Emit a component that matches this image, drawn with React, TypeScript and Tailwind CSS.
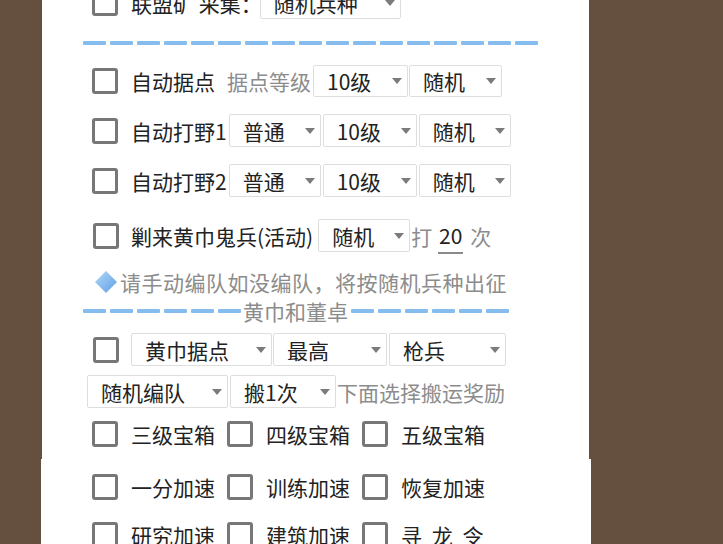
import React from 'react';

// 复选框（未选中）
const Check = () => (
  <span className="block w-[26px] h-[26px] shrink-0 border-[3px] border-[#777777] rounded-[3px] bg-white" />
);

// 下拉框
const Sel = ({ label, className = '' }: { label: string; className?: string }) => (
  <div
    className={`h-full shrink-0 flex items-center justify-between pl-[13px] pr-[5px] border border-[#dedede] rounded-[2px] bg-white text-[#222222] ${className}`}
  >
    <span>{label}</span>
    <svg width="10" height="6" viewBox="0 0 10 6">
      <path d="M0 0h10L5 6z" fill="#7b7b7b" />
    </svg>
  </div>
);

const Dashes = ({ count }: { count: number }) => (
  <div className="flex gap-[4px] shrink-0">
    {Array.from({ length: count }).map((_, i) => (
      <span key={i} className="block w-[23px] h-[4px] rounded-[1px] bg-[#86bdee]" />
    ))}
  </div>
);

const CheckItem = ({ label, last }: { label: string; last?: boolean }) => (
  <div className={`flex items-center ${last ? '' : 'w-[135px]'}`}>
    <Check />
    <span className="ml-[13px] text-[#222222] [word-spacing:5px]">{label}</span>
  </div>
);

const Diamond = () => (
  <svg width="24" height="24" viewBox="0 0 24 24" className="shrink-0">
    <defs>
      <linearGradient id="dg" x1="0" y1="0" x2="1" y2="1">
        <stop offset="0" stopColor="#b5d8f7" />
        <stop offset="1" stopColor="#5d9fe6" />
      </linearGradient>
    </defs>
    <path d="M12 1L23 12L12 23L1 12z" fill="url(#dg)" />
  </svg>
);

export default function App() {
  return (
    <div className="h-[544px] overflow-hidden bg-[#655040] flex flex-col font-['Noto_Sans_CJK_SC','Noto_Sans',sans-serif] text-[21px] leading-[28px]">
      {/* 上半部分面板 */}
      <div className="ml-[42px] w-[547px] h-[459px] shrink-0 bg-white overflow-hidden flex flex-col">
        {/* 联盟矿采集 */}
        <div className="flex items-center h-[32px] mt-[-13px] pl-[50px] shrink-0">
          <Check />
          <span className="ml-[13px] text-[#222222]">联盟矿 采集：</span>
          <Sel label="随机兵种" className="w-[141px] ml-[-2px] pl-[12px]" />
        </div>

        <div className="mt-[22px] ml-[41px]">
          <Dashes count={17} />
        </div>

        {/* 自动据点 */}
        <div className="flex items-center h-[32px] mt-[20px] pl-[50px] shrink-0">
          <Check />
          <span className="ml-[13px] text-[#222222]">自动据点</span>
          <span className="ml-[12px] text-[#8c8c8c]">据点等级</span>
          <Sel label="10级" className="w-[95px] ml-[2px]" />
          <Sel label="随机" className="w-[93px] ml-[1px]" />
        </div>

        {/* 自动打野1 */}
        <div className="flex items-center h-[33px] mt-[17px] pl-[50px] shrink-0">
          <Check />
          <span className="ml-[13px] text-[#222222]">自动打野1</span>
          <Sel label="普通" className="w-[92px] ml-[2px]" />
          <Sel label="10级" className="w-[94px] ml-[2px]" />
          <Sel label="随机" className="w-[92px] ml-[2px]" />
        </div>

        {/* 自动打野2 */}
        <div className="flex items-center h-[33px] mt-[17px] pl-[50px] shrink-0">
          <Check />
          <span className="ml-[13px] text-[#222222]">自动打野2</span>
          <Sel label="普通" className="w-[92px] ml-[2px]" />
          <Sel label="10级" className="w-[94px] ml-[2px]" />
          <Sel label="随机" className="w-[92px] ml-[2px]" />
        </div>

        {/* 剿来黄巾鬼兵 */}
        <div className="flex items-center h-[33px] mt-[22px] pl-[51px] shrink-0">
          <Check />
          <span className="ml-[12px] text-[#222222]">剿来黄巾鬼兵(活动)</span>
          <Sel label="随机" className="w-[92px] ml-[5px]" />
          <span className="ml-[1px] text-[#8c8c8c]">打</span>
          <span className="ml-[6px] w-[25px] h-[36px] shrink-0 flex items-center justify-center border-b-2 border-[#8a8a8a] text-[#222222]">
            20
          </span>
          <span className="ml-[7px] text-[#8c8c8c]">次</span>
        </div>

        {/* 提示 */}
        <div className="flex items-center h-[28px] mt-[16px] pl-[52px] shrink-0">
          <Diamond />
          <span className="ml-[2px] text-[#8c8c8c] tracking-[0.5px]">请手动编队如没编队，将按随机兵种出征</span>
        </div>

        {/* 黄巾和董卓 分隔线 */}
        <div className="flex items-center h-[28px] mt-[1px] pl-[41px] shrink-0">
          <Dashes count={6} />
          <span className="ml-[2px] text-[#8c8c8c]">黄巾和董卓</span>
          <div className="ml-[3px]">
            <Dashes count={6} />
          </div>
        </div>

        {/* 黄巾据点 */}
        <div className="flex items-center h-[33px] mt-[8px] pl-[51px] shrink-0">
          <Check />
          <Sel label="黄巾据点" className="w-[141px] ml-[12px]" />
          <Sel label="最高" className="w-[114px] ml-[1px]" />
          <Sel label="枪兵" className="w-[117px] ml-[2px]" />
        </div>

        {/* 搬运 */}
        <div className="flex items-center h-[33px] mt-[9px] pl-[45px] shrink-0">
          <Sel label="随机编队" className="w-[141px]" />
          <Sel label="搬1次" className="w-[106px] ml-[2px]" />
          <span className="ml-[1px] text-[#8c8c8c]">下面选择搬运奖励</span>
        </div>

        {/* 宝箱 */}
        <div className="flex items-center h-[31px] mt-[10px] pl-[50px] shrink-0">
          <CheckItem label="三级宝箱" />
          <CheckItem label="四级宝箱" />
          <CheckItem label="五级宝箱" last />
        </div>
      </div>

      {/* 下半部分面板 */}
      <div className="ml-[41px] w-[550px] flex-1 bg-white flex flex-col">
        <div className="flex items-center h-[32px] mt-[12px] pl-[51px] shrink-0">
          <CheckItem label="一分加速" />
          <CheckItem label="训练加速" />
          <CheckItem label="恢复加速" last />
        </div>
        <div className="flex items-center h-[32px] mt-[16px] pl-[51px] shrink-0">
          <CheckItem label="研究加速" />
          <CheckItem label="建筑加速" />
          <CheckItem label="寻 龙 令" last />
        </div>
      </div>
    </div>
  );
}
